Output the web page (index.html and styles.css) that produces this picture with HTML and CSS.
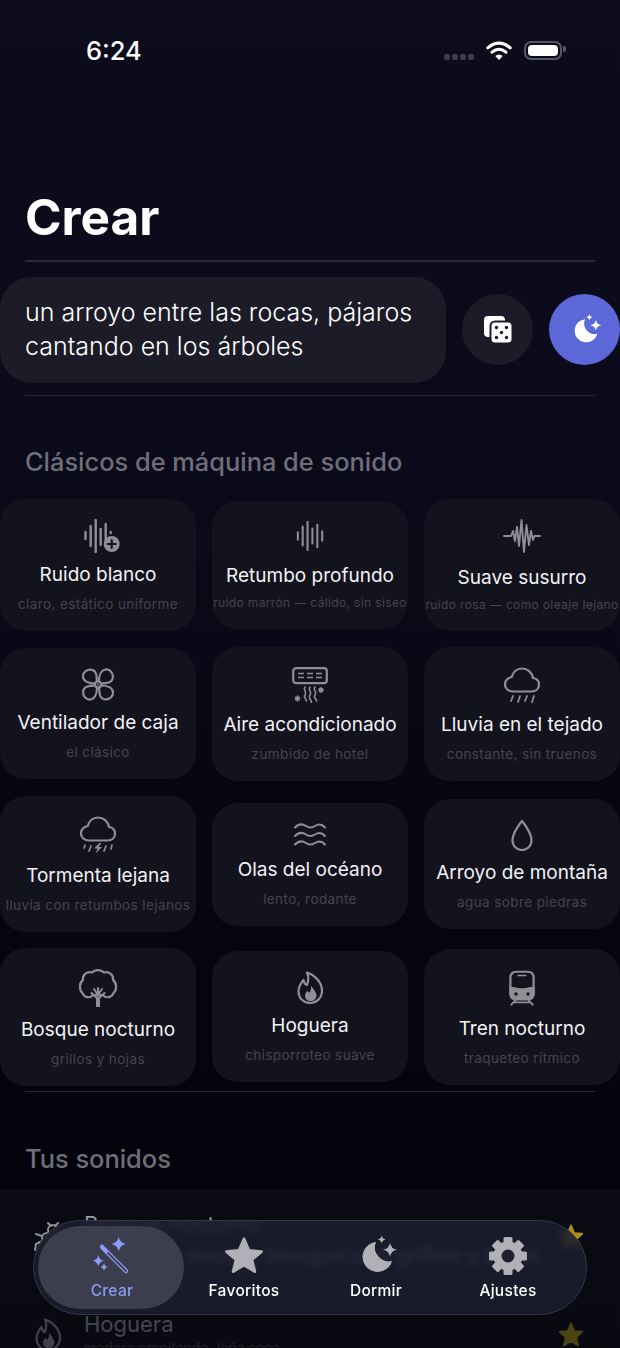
FILE: index.html
```html
<!DOCTYPE html>
<html lang="es">
<head>
  <meta charset="UTF-8" />
  <meta name="viewport" content="width=device-width, initial-scale=1.0" />
  <title>Crear</title>
  <link rel="stylesheet" href="styles.css">
</head>
<body>
  <div class="screen">
    <div class="status-bar">
      <span class="time">6:24</span>
      <div class="status-icons">
        <div class="signal"><i></i><i></i><i></i><i></i></div>
        <svg class="wifi" width="26" height="19" viewBox="0 0 26 19" fill="none" stroke="#fff" stroke-width="3" stroke-linecap="round">
          <path d="M1.8 6.8Q13 -2.6 24.2 6.8"/>
          <path d="M6 11.2Q13 5.4 20 11.2"/>
          <path d="M9.3 15Q13 12 16.7 15L13 19Z" fill="#fff" stroke="none"/>
        </svg>
        <div class="battery"><div class="battery-level"></div></div>
      </div>
    </div>

    <h1 class="page-title">Crear</h1>
    <div class="divider"></div>

    <div class="composer">
      <div class="prompt">un arroyo entre las rocas, pájaros cantando en los árboles</div>
      <button class="round-btn dice-btn">
        <svg width="30" height="30" viewBox="0 0 30 30">
          <rect x="1" y="1" width="21" height="21" rx="4" fill="#fff"/>
          <rect x="7.5" y="6.5" width="22" height="22" rx="4.5" fill="#fff" stroke="#1c1c29" stroke-width="2"/>
          <g fill="#1c1c29">
            <circle cx="13.5" cy="12.5" r="1.7"/><circle cx="23.5" cy="12.5" r="1.7"/>
            <circle cx="18.5" cy="17.5" r="1.7"/>
            <circle cx="13.5" cy="22.5" r="1.7"/><circle cx="23.5" cy="22.5" r="1.7"/>
          </g>
        </svg>
      </button>
      <button class="round-btn moon-btn">
        <svg width="34" height="34" viewBox="0 0 44 44" fill="#fff">
          <path d="M22 8A15 15 0 1 0 38 27A14 14 0 0 1 22 8Z"/>
          <path d="M27.7 1.5Q28.3 4.9 31.7 5.5Q28.3 6.1 27.7 9.5Q27.1 6.1 23.7 5.5Q27.1 4.9 27.7 1.5Z"/>
          <path d="M36 8.7Q37 14.7 43 15.7Q37 16.7 36 22.7Q35 16.7 29 15.7Q35 14.7 36 8.7Z"/>
        </svg>
      </button>
    </div>
    <div class="divider divider-low"></div>

    <h2 class="section-title">Clásicos de máquina de sonido</h2>

    <div class="sound-grid">
      <div class="sound-card">
        <svg width="44" height="34" viewBox="-8 0 44 34" fill="none" stroke="currentColor" stroke-width="2.4" stroke-linecap="round">
          <path d="M1.5 13V20M6.7 7V27M11.7 1V33M16.7 10V26M21.7 5V21M26.7 13V14"/>
          <circle cx="27.7" cy="25" r="8" fill="currentColor" stroke="none"/>
          <path d="M27.7 21V29M23.7 25H31.7" stroke="#15151f" stroke-width="2.2"/>
        </svg>
        <div class="sound-name">Ruido blanco</div>
        <div class="sound-desc">claro, estático uniforme</div>
      </div>
      <div class="sound-card sound-card-tight">
        <svg width="30" height="30" viewBox="0 0 30 32" fill="none" stroke="currentColor" stroke-width="2.2" stroke-linecap="round">
          <path d="M2 12V20M7.2 6V26M12.4 1V31M17.6 8V24M22.8 4V28M28 11V21"/>
        </svg>
        <div class="sound-name">Retumbo profundo</div>
        <div class="sound-desc sound-desc-fit">ruido marrón — cálido, sin siseo</div>
      </div>
      <div class="sound-card sound-card-tight">
        <svg width="38" height="34" viewBox="0 0 38 34" fill="none" stroke="currentColor" stroke-width="1.9" stroke-linecap="round" stroke-linejoin="round">
          <path d="M1 17H8L10 12L12 22L14 8L16 27L18.5 1L21 33L23.5 6L26 26L28 12L30 21L31.5 17H37"/>
        </svg>
        <div class="sound-name">Suave susurro</div>
        <div class="sound-desc sound-desc-fit">ruido rosa — como oleaje lejano</div>
      </div>

      <div class="sound-card">
        <svg width="34" height="33" viewBox="0 0 34 33" fill="none" stroke="currentColor" stroke-width="2.2" stroke-linejoin="round">
          <path d="M15.8 13C15.8 9 16 2 9.5 1.6C4.5 1.4 1.5 5.5 2 9C2.6 13 7.5 15.5 13.8 15.5"/>
          <path d="M15.8 13C15.8 9 16 2 9.5 1.6C4.5 1.4 1.5 5.5 2 9C2.6 13 7.5 15.5 13.8 15.5" transform="rotate(90 17 16.5)"/>
          <path d="M15.8 13C15.8 9 16 2 9.5 1.6C4.5 1.4 1.5 5.5 2 9C2.6 13 7.5 15.5 13.8 15.5" transform="rotate(180 17 16.5)"/>
          <path d="M15.8 13C15.8 9 16 2 9.5 1.6C4.5 1.4 1.5 5.5 2 9C2.6 13 7.5 15.5 13.8 15.5" transform="rotate(270 17 16.5)"/>
          <circle cx="17" cy="16.5" r="3"/>
          <circle cx="17" cy="16.5" r="1" fill="currentColor" stroke="none"/>
        </svg>
        <div class="sound-name">Ventilador de caja</div>
        <div class="sound-desc">el clásico</div>
      </div>
      <div class="sound-card">
        <svg width="36" height="36" viewBox="0 0 36 36" fill="none" stroke="currentColor" stroke-width="2.2" stroke-linecap="round">
          <rect x="1.2" y="1.2" width="33.6" height="15" rx="3"/>
          <path d="M6 6.5H12M15 6.5H21M24 6.5H30M6 10.5H12M15 10.5H21M24 10.5H30" stroke-width="1.5" stroke-linecap="butt"/>
          <path d="M13 20C10.5 23 15.5 25 13 28C11 30.5 14 31 14.5 34M18 20C15.5 23 20.5 25 18 28C16 30.5 19 32 19.5 35.5M23 20C20.5 23 25.5 25 23 28C21 30.5 24 31 24.5 34" stroke-width="1.6"/>
          <path d="M29 20.5V25.5M26.8 23H31.2M27.4 21.4L30.6 24.6M30.6 21.4L27.4 24.6M5.5 29V34M3.3 31.5H7.7M3.9 29.9L7.1 33.1M7.1 29.9L3.9 33.1" stroke-width="1.4"/>
        </svg>
        <div class="sound-name">Aire acondicionado</div>
        <div class="sound-desc">zumbido de hotel</div>
      </div>
      <div class="sound-card">
        <svg width="36" height="36" viewBox="0 0 36 36" fill="none" stroke="currentColor" stroke-width="2.2" stroke-linecap="round" stroke-linejoin="round">
          <path d="M9 24.5H27.5C32 24.5 35 21.5 35 17.5C35 14 32.5 11.5 29 11C28 5.5 23.5 1.5 18 1.5C13 1.5 9 5 7.8 10C3.8 11 1 14 1 17.5C1 21.5 4.5 24.5 9 24.5Z"/>
          <path d="M9 29L7 34M16 29L14 35M23 29L21 34M30 29L28 35" stroke-width="1.8"/>
        </svg>
        <div class="sound-name">Lluvia en el tejado</div>
        <div class="sound-desc">constante, sin truenos</div>
      </div>

      <div class="sound-card">
        <svg width="36" height="38" viewBox="0 0 36 38" fill="none" stroke="currentColor" stroke-width="2.2" stroke-linecap="round" stroke-linejoin="round">
          <path d="M9 24.5H27.5C32 24.5 35 21.5 35 17.5C35 14 32.5 11.5 29 11C28 5.5 23.5 1.5 18 1.5C13 1.5 9 5 7.8 10C3.8 11 1 14 1 17.5C1 21.5 4.5 24.5 9 24.5Z"/>
          <path d="M5 29L4 32M11 30L9 35M26 30L24 35M32 29L31 33" stroke-width="1.7"/>
          <path d="M19.5 27L14 32.5H17.5L15.5 37.5L22 31H18.5L21.5 27Z" fill="currentColor" stroke="none"/>
        </svg>
        <div class="sound-name">Tormenta lejana</div>
        <div class="sound-desc">lluvia con retumbos lejanos</div>
      </div>
      <div class="sound-card">
        <svg width="32" height="25" viewBox="0 0 32 25" fill="none" stroke="currentColor" stroke-width="2" stroke-linecap="round">
          <path d="M1 4.5C4.5 .5 8 .5 12 3C15 5 18 5 21 3C25 .5 28 1 31 4.5"/>
          <path d="M1 13C4.5 9 8 9 12 11.5C15 13.5 18 13.5 21 11.5C25 9 28 9.5 31 13"/>
          <path d="M1 21.5C4.5 17.5 8 17.5 12 20C15 22 18 22 21 20C25 17.5 28 18 31 21.5"/>
        </svg>
        <div class="sound-name">Olas del océano</div>
        <div class="sound-desc">lento, rodante</div>
      </div>
      <div class="sound-card">
        <svg width="22" height="32" viewBox="0 0 22 32" fill="none" stroke="currentColor" stroke-width="2.2" stroke-linejoin="round">
          <path d="M11 2C11 2 20.5 13 20.5 21.5A9.5 9.5 0 0 1 1.5 21.5C1.5 13 11 2 11 2Z"/>
        </svg>
        <div class="sound-name">Arroyo de montaña</div>
        <div class="sound-desc">agua sobre piedras</div>
      </div>

      <div class="sound-card">
        <svg width="40" height="40" viewBox="0 0 40 40" fill="none" stroke="currentColor" stroke-width="2.2" stroke-linecap="round" stroke-linejoin="round">
          <path d="M14 4.5C17 1.2 23 1.2 26 4.5C31 3 36 7 35 12C39 15 39 22 35.5 25C34 29.5 28 30.5 25.5 27.5C24 26.5 16 26.5 14.5 27.5C12 30.5 6 29.5 4.5 25C1 22 1 15 5 12C4 7 9 3 14 4.5Z"/>
          <path d="M20 39V30" stroke-width="4" stroke-linecap="butt"/>
          <path d="M20 31L13.5 25M20 31L26.5 25M20 28V20M20 27L16 21M20 27L24 21" stroke-width="2"/>
        </svg>
        <div class="sound-name">Bosque nocturno</div>
        <div class="sound-desc">grillos y hojas</div>
      </div>
      <div class="sound-card">
        <svg width="26" height="33" viewBox="0 0 26 33" fill="none" stroke="currentColor" stroke-width="2.2" stroke-linejoin="round">
          <path d="M10 1.5C17.5 4 25 11 25 20C25 27 19.5 32 13 32C6.5 32 1.5 27 1.5 20.5C1.5 15.5 4 12 6.5 9C7 12 8 13.5 10 14C11.5 10 12 6 10 1.5Z"/>
          <path d="M14 14.5C16 18 19.5 21 19.5 24.5C19.5 28 16.5 30 13.5 30C10.5 30 8 28 8 25C8 22.5 9.5 21 10.5 19.5C11 21 11.5 21.5 12.5 21.5C13.8 19.5 14.5 17.5 14 14.5Z" fill="currentColor" stroke="none"/>
        </svg>
        <div class="sound-name">Hoguera</div>
        <div class="sound-desc">chisporroteo suave</div>
      </div>
      <div class="sound-card">
        <svg width="26" height="38" viewBox="0 0 28 38" fill="none" stroke="currentColor" stroke-width="2.4" stroke-linecap="round" stroke-linejoin="round">
          <path d="M8 1.5H20C24 1.5 26.5 4 26.5 8V25C26.5 29 24 31 20 31H8C4 31 1.5 29 1.5 25V8C1.5 4 4 1.5 8 1.5Z"/>
          <path d="M10 5.5H18" stroke-width="1.8"/>
          <path d="M1.5 19H5C10 21 18 21 23 19H26.5V25C26.5 29 24 31 20 31H8C4 31 1.5 29 1.5 25Z" fill="currentColor"/>
          <circle cx="7.5" cy="25.5" r="1.8" fill="#13131d" stroke="none"/>
          <circle cx="20.5" cy="25.5" r="1.8" fill="#13131d" stroke="none"/>
          <path d="M8 31L2.5 37M20 31L25.5 37M5 34.5H23" stroke-width="2"/>
        </svg>
        <div class="sound-name">Tren nocturno</div>
        <div class="sound-desc">traqueteo rítmico</div>
      </div>
    </div>

    <div class="divider divider-grid"></div>
    <h2 class="section-title section-title-saved">Tus sonidos</h2>

    <div class="saved-list">
      <div class="saved-row">
        <svg class="saved-icon" width="30" height="40" viewBox="0 0 30 40" fill="none" stroke="currentColor" stroke-width="2" stroke-linecap="round">
          <circle cx="20" cy="8" r="5"/>
          <circle cx="14" cy="16" r="5"/>
          <path d="M15 1L18 4M25 1L22 4M9 14L3 12M9 19L3 22L2 28"/>
        </svg>
        <div class="saved-text">
          <div class="saved-name">Bosque nocturno</div>
          <div class="saved-desc">grillos de noche, bosque con grillos y brisa</div>
        </div>
        <svg class="saved-star" width="28" height="28" viewBox="0 0 44 44" fill="currentColor" stroke="currentColor" stroke-width="3" stroke-linejoin="round">
          <path d="M22 4L27 16L39.5 17L30 25.5L33 38.5L22 31.5L11 38.5L14 25.5L4.5 17L17 16Z"/>
        </svg>
      </div>
      <div class="saved-row saved-row-dim">
        <svg class="saved-icon" width="26" height="33" viewBox="0 0 26 33" fill="none" stroke="currentColor" stroke-width="2.2" stroke-linejoin="round">
          <path d="M10 1.5C17.5 4 25 11 25 20C25 27 19.5 32 13 32C6.5 32 1.5 27 1.5 20.5C1.5 15.5 4 12 6.5 9C7 12 8 13.5 10 14C11.5 10 12 6 10 1.5Z"/>
          <path d="M14 14.5C16 18 19.5 21 19.5 24.5C19.5 28 16.5 30 13.5 30C10.5 30 8 28 8 25C8 22.5 9.5 21 10.5 19.5C11 21 11.5 21.5 12.5 21.5C13.8 19.5 14.5 17.5 14 14.5Z" fill="currentColor" stroke="none"/>
        </svg>
        <div class="saved-text">
          <div class="saved-name">Hoguera</div>
          <div class="saved-desc">madera crepitando, leña seca</div>
        </div>
        <svg class="saved-star" width="28" height="28" viewBox="0 0 44 44" fill="currentColor" stroke="currentColor" stroke-width="3" stroke-linejoin="round">
          <path d="M22 4L27 16L39.5 17L30 25.5L33 38.5L22 31.5L11 38.5L14 25.5L4.5 17L17 16Z"/>
        </svg>
      </div>
    </div>

    <nav class="tab-bar">
      <div class="tab tab-active">
        <svg width="44" height="44" viewBox="0 0 44 44" fill="currentColor">
          <path d="M28.7 3Q30 8.7 35.7 10Q30 11.3 28.7 17Q27.4 11.3 21.7 10Q27.4 8.7 28.7 3Z"/>
          <path d="M8.3 21.2Q9.3 25.7 13.8 26.7Q9.3 27.7 8.3 32.2Q7.3 27.7 2.8 26.7Q7.3 25.7 8.3 21.2Z"/>
          <path d="M14 29.5Q14.7 32.3 17.5 33Q14.7 33.7 14 36.5Q13.3 33.7 10.5 33Q13.3 32.3 14 29.5Z"/>
          <path d="M12 13L36 37" stroke="currentColor" stroke-width="4.5" stroke-linecap="round"/>
          <path d="M18 19L36 37" stroke="#3c3d4d" stroke-width="1.8" stroke-linecap="round"/>
        </svg>
        <span class="tab-label">Crear</span>
      </div>
      <div class="tab">
        <svg width="44" height="44" viewBox="0 0 44 44" fill="#b0b0b6" stroke="#b0b0b6" stroke-width="3" stroke-linejoin="round">
          <path d="M22 5L26.9 16.5L39.5 17.7L29.8 25.7L32.8 37.5L22 31L11.2 37.5L14.2 25.7L4.5 17.7L17.1 16.5Z"/>
        </svg>
        <span class="tab-label">Favoritos</span>
      </div>
      <div class="tab">
        <svg width="44" height="44" viewBox="0 0 44 44" fill="#b0b0b6">
          <path d="M22 8A15 15 0 1 0 38 27A14 14 0 0 1 22 8Z"/>
          <path d="M27.7 1.5Q28.3 4.9 31.7 5.5Q28.3 6.1 27.7 9.5Q27.1 6.1 23.7 5.5Q27.1 4.9 27.7 1.5Z"/>
          <path d="M36 8.7Q37 14.7 43 15.7Q37 16.7 36 22.7Q35 16.7 29 15.7Q35 14.7 36 8.7Z"/>
        </svg>
        <span class="tab-label">Dormir</span>
      </div>
      <div class="tab">
        <svg width="44" height="44" viewBox="0 0 44 44" fill="#b0b0b6">
          <circle cx="22" cy="22" r="10.5" fill="none" stroke="#b0b0b6" stroke-width="8"/>
          <rect x="17.5" y="3" width="9" height="8" rx="1.5"/>
          <rect x="17.5" y="3" width="9" height="8" rx="1.5" transform="rotate(45 22 22)"/>
          <rect x="17.5" y="3" width="9" height="8" rx="1.5" transform="rotate(90 22 22)"/>
          <rect x="17.5" y="3" width="9" height="8" rx="1.5" transform="rotate(135 22 22)"/>
          <rect x="17.5" y="3" width="9" height="8" rx="1.5" transform="rotate(180 22 22)"/>
          <rect x="17.5" y="3" width="9" height="8" rx="1.5" transform="rotate(225 22 22)"/>
          <rect x="17.5" y="3" width="9" height="8" rx="1.5" transform="rotate(270 22 22)"/>
          <rect x="17.5" y="3" width="9" height="8" rx="1.5" transform="rotate(315 22 22)"/>
        </svg>
        <span class="tab-label">Ajustes</span>
      </div>
    </nav>
  </div>
</body>
</html>
```

FILE: styles.css
```css
* {
  box-sizing: border-box;
}

body {
  margin: 0;
  font-family: Inter, 'Noto Sans', sans-serif;
  background-color: #04040f;
}

.screen {
  position: relative;
  width: 620px;
  height: 1348px;
  overflow: hidden;
  color: #fff;
  background: linear-gradient(180deg, #0c0c1d 0%, #0a0a1b 35%, #05050f 70%, #02020b 100%);
}

/* status bar */
.status-bar {
  display: flex;
  justify-content: space-between;
  align-items: center;
  height: 100px;
  padding: 0 58px 0 86px;
}

.time {
  font-size: 25.5px;
  font-weight: 500;
}

.status-icons {
  display: flex;
  align-items: center;
  gap: 12px;
}

.signal {
  display: flex;
  gap: 2px;
  margin-top: 14px;
}

.signal i {
  width: 6px;
  height: 6px;
  border-radius: 2px;
  background: #3c3c4b;
}

.battery {
  position: relative;
  width: 38px;
  height: 19px;
  padding: 2px;
  border: 2px solid #55556a;
  border-radius: 7px;
}

.battery::after {
  content: "";
  position: absolute;
  top: 3px;
  right: -6px;
  width: 3px;
  height: 6px;
  border-radius: 0 2px 2px 0;
  background: #55556a;
}

.battery-level {
  height: 100%;
  border-radius: 4px;
  background: #fff;
}

/* header */
.page-title {
  margin: 87px 25px 0;
  font-size: 49.5px;
  line-height: 60px;
  font-weight: 700;
}

.divider {
  height: 1.5px;
  margin: 13px 25px 0;
  background: #2a2a37;
}

.divider-low {
  margin-top: 12px;
}

.divider-grid {
  margin-top: 5px;
}

/* prompt row */
.composer {
  display: flex;
  align-items: center;
  gap: 16px;
  margin-top: 15px;
}

.prompt {
  flex: 1;
  height: 106px;
  padding: 18px 25px;
  border-radius: 32px;
  background: #1c1c29;
  font-size: 25px;
  line-height: 34px;
  font-weight: 300;
}

.round-btn {
  display: flex;
  align-items: center;
  justify-content: center;
  flex: none;
  width: 71px;
  height: 71px;
  padding: 0;
  border: none;
  border-radius: 50%;
}

.dice-btn {
  background: #1c1c29;
}

.moon-btn {
  background: #5c68d8;
}

.section-title {
  margin: 50px 25px 0;
  font-size: 25.4px;
  line-height: 32px;
  font-weight: 500;
  color: #6f6f79;
}

.section-title-saved {
  margin-top: 51px;
}

/* classic sounds */
.sound-grid {
  display: grid;
  grid-template-columns: repeat(3, 196px);
  column-gap: 16px;
  row-gap: 15.5px;
  align-items: center;
  margin-top: 21px;
}

.sound-card {
  display: flex;
  flex-direction: column;
  align-items: center;
  padding: 20px 0 18px;
  border-radius: 26px;
  background: #13131e;
  color: #8f8f96;
}

.sound-card svg {
  flex: none;
}

.sound-name {
  margin-top: 10px;
  font-size: 19px;
  line-height: 24px;
  font-weight: 400;
  color: #f2f2f5;
  white-space: nowrap;
}

.sound-desc {
  margin-top: 8px;
  font-size: 13.5px;
  line-height: 18px;
  letter-spacing: .4px;
  color: #44444f;
  white-space: nowrap;
}

/* long descriptions shrink to fit the card */
.sound-desc-fit {
  font-size: 12px;
  letter-spacing: .36px;
}

.sound-card-tight {
  padding-bottom: 17px;
}

.sound-card-tight .sound-name {
  margin-top: 13px;
}

.sound-card-tight .sound-desc {
  margin-top: 6px;
}

/* saved sounds, mostly behind the tab bar */
.saved-list {
  margin-top: 14px;
  background: rgba(255, 255, 255, .03);
}

.saved-row {
  display: flex;
  align-items: flex-start;
  height: 96px;
  padding: 20px 35px 0 33px;
  color: #8f8f96;
}

.saved-row-dim {
  padding-top: 24px;
  opacity: .42;
}

.saved-icon {
  flex: none;
  width: 30px;
  margin-top: 13px;
}

.saved-text {
  flex: 1;
  margin-left: 21px;
  white-space: nowrap;
}

.saved-name {
  font-size: 22px;
  line-height: 30px;
  color: #9a9aa2;
}

.saved-desc {
  margin-top: 4px;
  font-size: 22px;
  line-height: 25px;
  font-weight: 600;
  color: #7b7b86;
}

.saved-row-dim .saved-icon {
  margin-top: 9px;
}

.saved-row-dim .saved-desc {
  margin-top: 0;
  font-size: 14px;
  line-height: 18px;
  font-weight: 400;
  opacity: .5;
}

.saved-star {
  flex: none;
  margin-top: 14px;
  color: #a8931a;
}

.saved-row-dim .saved-star {
  margin-top: 12px;
}

/* tab bar */
.tab-bar {
  position: absolute;
  left: 33px;
  top: 1220px;
  display: grid;
  grid-template-columns: repeat(4, 132px);
  width: 554px;
  height: 95px;
  padding: 0 12px;
  border: 1.5px solid #34354a;
  border-radius: 48px;
  background: rgba(29, 30, 45, .88);
  backdrop-filter: blur(3px);
}

.tab {
  position: relative;
  display: flex;
  flex-direction: column;
  align-items: center;
  padding-top: 13px;
  color: #fff;
}

.tab svg,
.tab-label {
  position: relative;
}

.tab-label {
  margin-top: 3px;
  font-size: 15.5px;
  line-height: 20px;
  font-weight: 500;
  letter-spacing: .3px;
}

.tab-active {
  color: #8c9cf8;
}

.tab-active::before {
  content: "";
  position: absolute;
  top: 5px;
  bottom: 5px;
  left: -8px;
  right: -6px;
  border-radius: 42px;
  background: #3c3d4d;
}
```
